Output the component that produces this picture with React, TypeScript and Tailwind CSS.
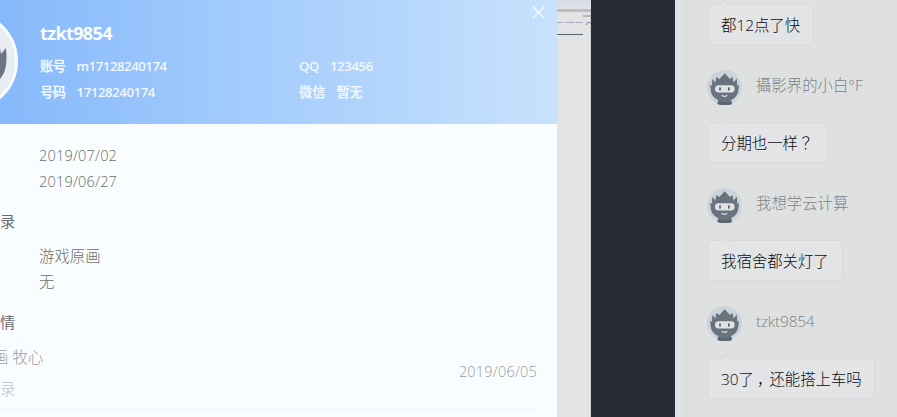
import React from 'react';

const ui = 'font-["Open_Sans","Noto_Sans_CJK_SC",sans-serif]';

function Ninja({ className }: { className: string }) {
  return (
    <svg viewBox="0 0 35 35" className={className}>
      <circle cx="17.5" cy="17.5" r="17.5" fill="#cdd3da" />
      <path
        d="M10.5 34 L11.3 30 C6.5 28 3.7 24 3.6 19 L3 14.5 L5 16 L5.3 9 L8.5 12.5 L9.2 7 L12.3 9 L17.7 3.3 L23 9 L25.5 7 L26.5 12.5 L30 8.5 L30.2 16 L32 14.5 L31.5 19 C31.4 24 28.6 28 24 30 L25 34 C20 35.4 15 35.4 10.5 34Z"
        fill="#69737d"
      />
      <path d="M10.5 34 L11.2 31 Q17.6 33.5 24.2 31 L25 34 C20 35.4 15 35.4 10.5 34Z" fill="#5b6674" />
      <rect x="8" y="15.2" width="19.6" height="7.3" rx="3.4" fill="#dfe1e2" />
      <rect x="12.2" y="17.3" width="1.7" height="3.4" rx="0.8" fill="#59636c" />
      <rect x="21" y="17.3" width="1.7" height="3.4" rx="0.8" fill="#59636c" />
      <path d="M14.8 25.3 Q17.5 27.5 20.3 25.3" fill="none" stroke="#d9dcde" strokeWidth="1.1" />
    </svg>
  );
}

function Bubble({ children, width }: { children: React.ReactNode; width: string }) {
  return (
    <div
      className={`relative flex h-[41px] items-center whitespace-nowrap rounded-[4px] border border-[#d8dbdb] bg-[#e2e4e6] pl-[13px] pt-[2px] text-[15.4px] font-light text-[#090c12] ${width}`}
    >
      <svg className="absolute left-[12px] top-[-6px]" width="10" height="7" viewBox="0 0 10 7">
        <path d="M1 7 L5 1 L9 7" fill="#e2e4e6" stroke="#d4d7d7" strokeWidth="0.9" />
        <path d="M1.5 6.7 H8.5" stroke="#e2e4e6" />
      </svg>
      <span>{children}</span>
    </div>
  );
}

function Message({ name, text, width }: { name: React.ReactNode; text: React.ReactNode; width: string }) {
  return (
    <div className="mt-[25px]">
      <div className="mb-[17px] flex h-[35px]">
        <Ninja className="h-[35px] w-[35px] shrink-0" />
        <span className="ml-[14px] whitespace-nowrap text-[15.4px] font-light leading-[32px] text-[#7d8289]">{name}</span>
      </div>
      <Bubble width={width}>{text}</Bubble>
    </div>
  );
}

function Field({ label, value, gap }: { label: string; value: string; gap: string }) {
  return (
    <div className={`flex h-[26px] items-center whitespace-nowrap ${gap}`}>
      <span>{label}</span>
      <span>{value}</span>
    </div>
  );
}

function ProfileHeader() {
  return (
    <header className="flex h-[124px] bg-linear-to-r from-[#86b9fb] to-[#c8e2fc]">
      <div className="-ml-[82px] mt-[11px] h-[100px] w-[100px] shrink-0 overflow-hidden rounded-full border-[3px] border-[#f8fcff] bg-[#e7edf1]">
        <svg viewBox="0 0 94 94" className="h-full w-full">
          <path
            d="M10 50 L12 24 L24 34 L47 9 L70 34 L78 28 L80 40 L85 34 C86 47 86 58 78 66 L66 80 L28 80Z"
            fill="#6b7584"
          />
        </svg>
      </div>
      <div className="ml-[22px] w-[259px] shrink-0 pt-[20px] text-[13.2px] font-semibold text-[#f0f7ff]">
        <h1 className="mb-[8px] text-[18px] font-bold leading-[26px] tracking-[-0.6px] text-[#fafdff]">tzkt9854</h1>
        <Field label="账号" value="m17128240174" gap="gap-[11px] tracking-[-0.45px]" />
        <Field label="号码" value="17128240174" gap="gap-[11px] tracking-[-0.42px]" />
      </div>
      <div className="w-[233px] shrink-0 pt-[54px] text-[13.2px] font-semibold text-[#f0f7ff]">
        <Field label="QQ" value="123456" gap="gap-[11px] tracking-[-0.4px]" />
        <Field label="微信" value="暂无" gap="gap-[11px]" />
      </div>
      <svg className="mt-[6px] h-[13px] w-[13px] shrink-0" viewBox="0 0 13 13">
        <path d="M.8.8 12.2 12.2 M12.2.8 .8 12.2" stroke="#f3f9ff" strokeWidth="1.6" />
      </svg>
    </header>
  );
}

function ProfileBody() {
  return (
    <div className="pt-[19px] text-[15.4px] font-light text-[#6d6d6b]">
      <div className="ml-[39px] text-[14.5px] leading-[26px] tracking-[0.2px]">
        <div>2019/07/02</div>
        <div>2019/06/27</div>
      </div>
      <h2 className="mt-[12px] h-[28px] text-[15.2px] font-normal leading-[28px] text-[#686c70]">录</h2>
      <div className="ml-[39px] mt-[9px] leading-[26px]">
        <div>游戏原画</div>
        <div>无</div>
      </div>
      <h2 className="mt-[12px] h-[28px] text-[15.2px] font-normal leading-[28px] text-[#686c70]">情</h2>
      <div className="mr-[20px] flex h-[73px] justify-between border-b border-[#f3f7f8]">
        <div className="-ml-[7px] pt-[6px]">
          <div className="whitespace-nowrap leading-[32px] text-[#9c9d9e]">画 牧心</div>
          <div className="ml-[7px] leading-[32px] text-[#bfc1c1]">录</div>
        </div>
        <div className="pt-[23px] text-[14.5px] leading-[26px] tracking-[0.2px] text-[#9b9c9d]">2019/06/05</div>
      </div>
    </div>
  );
}

export default function App() {
  return (
    <div className={`flex h-[417px] w-[897px] overflow-hidden bg-[#dfe1e0] ${ui}`}>
      <section className="w-[557px] shrink-0 overflow-hidden bg-[#f9fdff]">
        <ProfileHeader />
        <ProfileBody />
      </section>
      <div className="w-[34px] shrink-0 border-r border-[#cfd1d3] bg-[#e2e3e5]">
        <svg width="34" height="40" viewBox="0 0 34 40">
          <defs>
            <linearGradient id="fade" x1="0" y1="0" x2="0" y2="1">
              <stop offset="0" stopColor="#d7dbe7" />
              <stop offset="1" stopColor="#e1e2e5" />
            </linearGradient>
          </defs>
          <rect width="34" height="9" fill="url(#fade)" />
          <rect y="9" width="34" height="3" fill="#bdbebf" />
          <rect x="26" y="15" width="8" height="2" fill="#b5b6b8" />
          <path d="M0 22.5H6M8 22.5H18M19 22.5H26" stroke="#aaa9c2" />
          <path d="M0 34.5H26" stroke="#60676a" />
          <path d="M29.5 25 V23.5 L32 22 L34 24" fill="none" stroke="#85888a" />
        </svg>
      </div>
      <div className="w-[84px] shrink-0 bg-[#272b33]" />
      <div className="w-[12px] shrink-0 border-r border-[#d9dcdb] bg-[#e0e1e3]" />
      <main className="ml-[20px] pt-[4px]">
        <Bubble width="w-[107px]">都12点了快</Bubble>
        <Message
          name="攝影界的小白°F"
          text={<>分期也一样<span className='font-["Noto_Sans_CJK_TC",sans-serif]'>？</span></>}
          width="w-[121px]"
        />
        <Message name="我想学云计算" text="我宿舍都关灯了" width="w-[136px]" />
        <Message
          name={<span className="tracking-[-0.2px]">tzkt9854</span>}
          text={<>30了<span className="ml-[3px] mr-[-3px]">，</span>还能搭上车吗</>}
          width="w-[168px]"
        />
      </main>
    </div>
  );
}
